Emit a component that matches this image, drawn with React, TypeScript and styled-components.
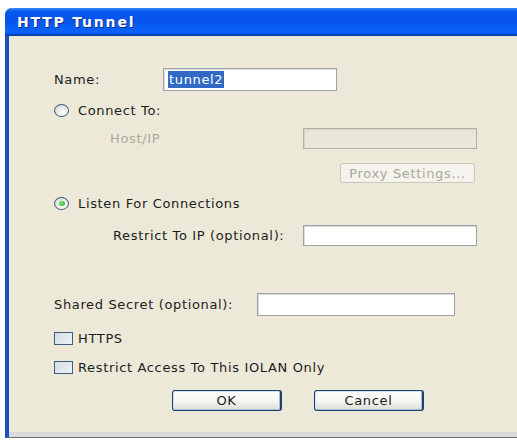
import React from "react";
import styled, { createGlobalStyle } from "styled-components";

const Global = createGlobalStyle`
  html, body { margin: 0; padding: 0; background: #ffffff; }
  body { font-family: "DejaVu Sans", "Liberation Sans", sans-serif; }
`;

const Page = styled.div`
  padding: 8px 0 0 5px;
  width: 512px;
  overflow: hidden;
`;

const Window = styled.div`
  width: 540px;
  border-left: 4px solid #1a4fc4;
  border-bottom: 1px solid #6f7276;
  border-top-left-radius: 7px;
  box-shadow: inset 0 -5px 0 #d8dadb;
  background: #ece9d8;
`;

const TitleBar = styled.div`
  height: 28px;
  margin-left: -4px;
  border-top-left-radius: 7px;
  background: linear-gradient(
    to bottom,
    #3b8cf6 0%,
    #0858ee 12%,
    #0754ec 45%,
    #0a63f6 85%,
    #0757f0 92%,
    #0a3ea8 96%,
    #0a3ea8 100%
  );
  display: flex;
  align-items: center;
  padding-left: 12px;
`;

const Title = styled.span`
  color: #ffffff;
  font-family: "DejaVu Sans", sans-serif;
  font-weight: bold;
  font-size: 14px;
  letter-spacing: 1.8px;
  text-shadow: 1px 1px 0 #0a2f8f;
`;

const Body = styled.div`
  display: flex;
  flex-direction: column;
  padding: 0 0 26px 45px;
  color: #1c1c1c;
  font-size: 13px;
  letter-spacing: 0.65px;
`;

const Row = styled.div<{ $top: number; $h: number; $indent?: number }>`
  display: flex;
  align-items: center;
  margin-top: ${(p) => p.$top}px;
  height: ${(p) => p.$h}px;
  padding-left: ${(p) => p.$indent ?? 0}px;
`;

const Label = styled.span<{ $w?: number; $disabled?: boolean }>`
  flex: none;
  width: ${(p) => (p.$w ? `${p.$w}px` : "auto")};
  color: ${(p) => (p.$disabled ? "#aca899" : "#1c1c1c")};
  white-space: nowrap;
`;

const TextBox = styled.div<{ $w: number; $disabled?: boolean }>`
  flex: none;
  box-sizing: border-box;
  width: ${(p) => p.$w}px;
  height: 100%;
  background: ${(p) => (p.$disabled ? "#e9e6da" : "#ffffff")};
  border: 1px solid ${(p) => (p.$disabled ? "#b3b0a4" : "#9ea3a7")};
  box-shadow: inset 1px 1px 0 ${(p) => (p.$disabled ? "#d6d3c7" : "#dcdcdc")};
  display: flex;
  align-items: center;
  padding-left: 4px;
`;

const Selected = styled.span`
  background: #316ac5;
  color: #ffffff;
  padding: 1px 1px;
  line-height: 15px;
`;

const Radio = styled.span<{ $checked?: boolean }>`
  flex: none;
  box-sizing: border-box;
  width: 15px;
  height: 13px;
  border-radius: 50%;
  border: 1px solid #3a5a7e;
  background: radial-gradient(ellipse at 65% 70%, #ffffff 0%, #e4e4e0 60%, #c9c9c2 100%);
  margin-right: 9px;
  display: flex;
  align-items: center;
  justify-content: center;
  &::after {
    content: "";
    display: ${(p) => (p.$checked ? "block" : "none")};
    width: 6px;
    height: 5px;
    border-radius: 50%;
    background: radial-gradient(circle at 40% 40%, #7ee17e, #21a121);
  }
`;

const Check = styled.span`
  flex: none;
  box-sizing: border-box;
  width: 19px;
  height: 13px;
  border: 1px solid #3f5d7c;
  background: linear-gradient(135deg, #d4dce4 0%, #eef2f5 100%);
  margin-right: 5px;
`;

const Button = styled.div<{ $w: number; $disabled?: boolean; $left?: number }>`
  flex: none;
  box-sizing: border-box;
  width: ${(p) => p.$w}px;
  height: 100%;
  margin-left: ${(p) => p.$left ?? 0}px;
  border-radius: 3px;
  display: flex;
  align-items: center;
  justify-content: center;
  border: 1px solid ${(p) => (p.$disabled ? "#cac8bb" : "#1f3f6b")};
  border-right-width: ${(p) => (p.$disabled ? 1 : 2)}px;
  background: ${(p) =>
    p.$disabled
      ? "#f4f3ee"
      : "linear-gradient(to bottom, #ffffff 0%, #f3f3ef 60%, #dcdbd3 100%)"};
  box-shadow: ${(p) => (p.$disabled ? "none" : "inset 1px 1px 0 #cfe1f7, inset -1px -1px 0 #a9bfd9")};
  color: ${(p) => (p.$disabled ? "#aca899" : "#1c1c1c")};
  white-space: nowrap;
`;

export default function App() {
  return (
    <Page>
      <Global />
      <Window>
        <TitleBar>
          <Title>HTTP Tunnel</Title>
        </TitleBar>
        <Body>
          <Row $top={32} $h={23}>
            <Label $w={109}>Name:</Label>
            <TextBox $w={174}>
              <Selected>tunnel2</Selected>
            </TextBox>
          </Row>
          <Row $top={11} $h={16}>
            <Radio />
            <Label>Connect To:</Label>
          </Row>
          <Row $top={10} $h={21} $indent={56}>
            <Label $w={193} $disabled>
              Host/IP
            </Label>
            <TextBox $w={174} $disabled />
          </Row>
          <Row $top={14} $h={20}>
            <Button $w={135} $left={286} $disabled>
              Proxy Settings...
            </Button>
          </Row>
          <Row $top={12} $h={16}>
            <Radio $checked />
            <Label>Listen For Connections</Label>
          </Row>
          <Row $top={14} $h={21} $indent={59}>
            <Label $w={190}>Restrict To IP (optional):</Label>
            <TextBox $w={174} />
          </Row>
          <Row $top={47} $h={23}>
            <Label $w={203}>Shared Secret (optional):</Label>
            <TextBox $w={198} />
          </Row>
          <Row $top={14} $h={16}>
            <Check />
            <Label>HTTPS</Label>
          </Row>
          <Row $top={13} $h={16}>
            <Check />
            <Label>Restrict Access To This IOLAN Only</Label>
          </Row>
          <Row $top={15} $h={21}>
            <Button $w={110} $left={118}>
              OK
            </Button>
            <Button $w={110} $left={32}>
              Cancel
            </Button>
          </Row>
        </Body>
      </Window>
    </Page>
  );
}
